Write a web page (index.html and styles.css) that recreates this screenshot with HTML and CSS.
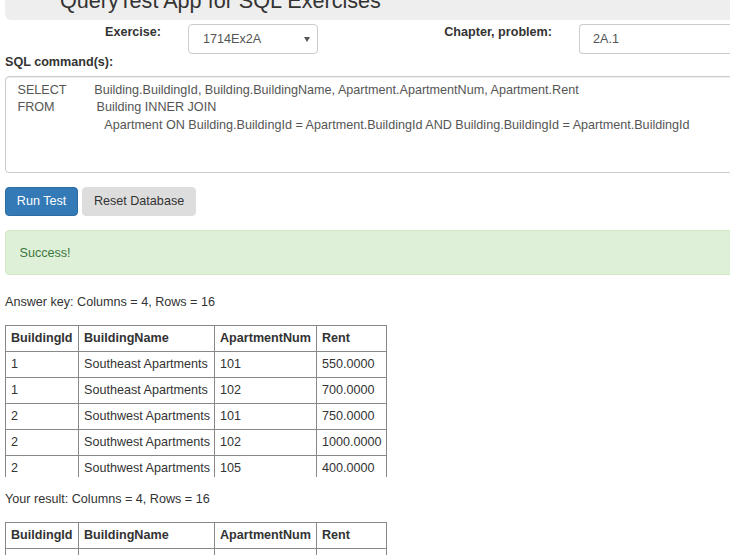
FILE: index.html
```html
<!DOCTYPE html>
<html lang="en">
<head>
<meta charset="utf-8">
<title>QueryTest App for SQL Exercises</title>
<link rel="stylesheet" href="styles.css">
</head>
<body>
<div class="page">
  <header class="header">
    <h1 class="title">QueryTest App for SQL Exercises</h1>
  </header>

  <div class="form-row">
    <label class="label label-exercise">Exercise:</label>
    <div class="select-box">
      <span>1714Ex2A</span>
      <svg class="caret" width="6" height="5" viewBox="0 0 6 5"><path d="M0 0 H6 L3 5 Z" fill="#555"/></svg>
    </div>
    <label class="label label-chapter">Chapter, problem:</label>
    <div class="text-box">2A.1</div>
  </div>

  <label class="label sql-label">SQL command(s):</label>
  <textarea class="sql" readonly>SELECT        Building.BuildingId, Building.BuildingName, Apartment.ApartmentNum, Apartment.Rent
FROM            Building INNER JOIN
                         Apartment ON Building.BuildingId = Apartment.BuildingId AND Building.BuildingId = Apartment.BuildingId</textarea>

  <div class="buttons">
    <button class="btn btn-primary">Run Test</button>
    <button class="btn btn-default">Reset Database</button>
  </div>

  <div class="alert">Success!</div>

  <p class="summary">Answer key: Columns = 4, Rows = 16</p>
  <div class="table-wrap">
    <table class="result">
      <colgroup><col class="c-id"><col class="c-name"><col class="c-num"><col class="c-rent"></colgroup>
      <thead>
        <tr><th>BuildingId</th><th>BuildingName</th><th>ApartmentNum</th><th>Rent</th></tr>
      </thead>
      <tbody>
        <tr><td>1</td><td>Southeast Apartments</td><td>101</td><td>550.0000</td></tr>
        <tr><td>1</td><td>Southeast Apartments</td><td>102</td><td>700.0000</td></tr>
        <tr><td>2</td><td>Southwest Apartments</td><td>101</td><td>750.0000</td></tr>
        <tr><td>2</td><td>Southwest Apartments</td><td>102</td><td>1000.0000</td></tr>
        <tr><td>2</td><td>Southwest Apartments</td><td>105</td><td>400.0000</td></tr>
      </tbody>
    </table>
  </div>

  <p class="summary summary-second">Your result: Columns = 4, Rows = 16</p>
  <div class="table-wrap">
    <table class="result">
      <colgroup><col class="c-id"><col class="c-name"><col class="c-num"><col class="c-rent"></colgroup>
      <thead>
        <tr><th>BuildingId</th><th>BuildingName</th><th>ApartmentNum</th><th>Rent</th></tr>
      </thead>
      <tbody>
        <tr><td>1</td><td>Southeast Apartments</td><td>101</td><td>550.0000</td></tr>
        <tr><td>1</td><td>Southeast Apartments</td><td>102</td><td>700.0000</td></tr>
        <tr><td>2</td><td>Southwest Apartments</td><td>101</td><td>750.0000</td></tr>
        <tr><td>2</td><td>Southwest Apartments</td><td>102</td><td>1000.0000</td></tr>
        <tr><td>2</td><td>Southwest Apartments</td><td>105</td><td>400.0000</td></tr>
      </tbody>
    </table>
  </div>
</div>
</body>
</html>
```

FILE: styles.css
```css
html, body {
  margin: 0;
  padding: 0;
  overflow: hidden;
  background: #fff;
}

body {
  font-family: "Liberation Sans", Arial, sans-serif;
  font-size: 12.6px;
  line-height: 18px;
  color: #333;
}

.page {
  width: 760px;
  padding-left: 5px;
}

.header {
  margin-top: -40px;
  padding: 29px 0 7px 55px;
  background: #eee;
  border-radius: 6px;
}

.title {
  margin: 0;
  font-size: 21.6px;
  line-height: 24px;
  font-weight: normal;
  color: #333;
}

.form-row {
  display: flex;
  align-items: flex-start;
  margin-top: 4px;
}

.label {
  display: block;
  font-weight: bold;
  line-height: 16px;
  color: #333;
}

.label-exercise {
  width: 156px;
  text-align: right;
  margin-right: 27px;
}

.label-chapter {
  width: 234px;
  text-align: right;
  margin-right: 27px;
}

.select-box {
  box-sizing: border-box;
  width: 130px;
  height: 30px;
  border: 1px solid #ccc;
  border-radius: 4px;
  padding: 0 7px 0 14px;
  display: flex;
  align-items: center;
  justify-content: space-between;
  color: #555;
  line-height: 28px;
}

.caret {
  display: block;
  margin-top: 1px;
}

.text-box {
  box-sizing: border-box;
  width: 180px;
  height: 30px;
  border: 1px solid #ccc;
  border-right: none;
  border-radius: 4px 0 0 4px;
  padding: 0 13px;
  line-height: 28px;
  color: #555;
}

.sql-label {
  margin-top: 0;
}

.sql {
  display: block;
  box-sizing: border-box;
  width: 760px;
  height: 97px;
  margin: 6px 0 0 0;
  border: 1px solid #ccc;
  border-radius: 4px;
  padding: 4.5px 11px 4.5px 11.5px;
  font-family: "Liberation Sans", Arial, sans-serif;
  font-size: 12.6px;
  line-height: 17.5px;
  color: #555;
  resize: none;
  overflow: hidden;
  white-space: pre;
  outline: none;
  box-shadow: inset 0 1px 1px rgba(0,0,0,.075);
}

.buttons {
  display: flex;
  gap: 4px;
  margin-top: 14px;
}

.btn {
  font-family: "Liberation Sans", Arial, sans-serif;
  font-size: 12.6px;
  line-height: 17px;
  padding: 5px 10.8px;
  border: 1px solid transparent;
  border-radius: 4px;
  cursor: pointer;
}

.btn-primary {
  background: #337ab7;
  border-color: #2e6da4;
  color: #fff;
}

.btn-default {
  background: #ddd;
  border-color: #ddd;
  color: #333;
}

.alert {
  margin-top: 14px;
  padding: 12.5px 13.5px;
  background: #dff0d8;
  border: 1px solid #d6e9c6;
  border-radius: 4px;
  color: #3c763d;
}

.summary {
  margin: 18px 0 14px 0;
}

.summary-second {
  margin-top: 13px;
}

.table-wrap {
  height: 152px;
  overflow: hidden;
}

.result {
  border-collapse: collapse;
  table-layout: fixed;
  width: 382px;
  color: #333;
}

.c-id { width: 73px; }
.c-name { width: 136px; }
.c-num { width: 102px; }
.c-rent { width: 70px; }

.result th,
.result td {
  border: 1px solid #888;
  padding: 4px 5px;
  line-height: 17px;
  text-align: left;
  white-space: nowrap;
  overflow: hidden;
}

.result th {
  font-weight: bold;
}
```
